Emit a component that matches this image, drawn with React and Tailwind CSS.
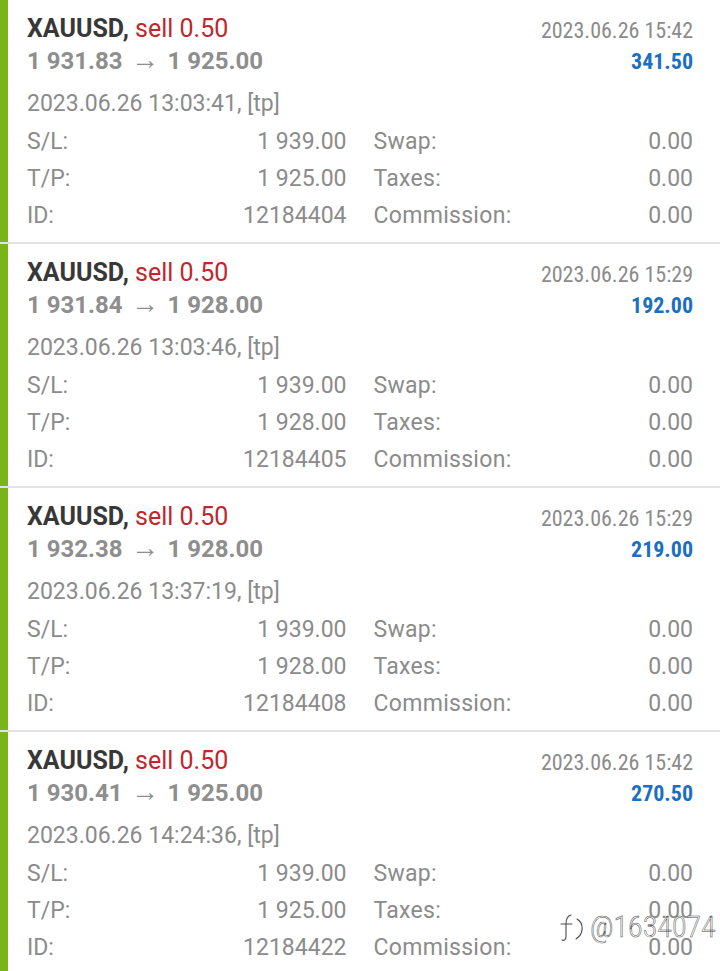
import React from 'react';

const trades = [
  { open: '1 931.83', close: '1 925.00', closeTime: '2023.06.26 15:42', profit: '341.50', openTime: '2023.06.26 13:03:41', sl: '1 939.00', tp: '1 925.00', id: '12184404' },
  { open: '1 931.84', close: '1 928.00', closeTime: '2023.06.26 15:29', profit: '192.00', openTime: '2023.06.26 13:03:46', sl: '1 939.00', tp: '1 928.00', id: '12184405' },
  { open: '1 932.38', close: '1 928.00', closeTime: '2023.06.26 15:29', profit: '219.00', openTime: '2023.06.26 13:37:19', sl: '1 939.00', tp: '1 928.00', id: '12184408' },
  { open: '1 930.41', close: '1 925.00', closeTime: '2023.06.26 15:42', profit: '270.50', openTime: '2023.06.26 14:24:36', sl: '1 939.00', tp: '1 925.00', id: '12184422' },
];

const condensed = "font-['Roboto_Condensed',Roboto,sans-serif]";

function Row({ label, value, label2, value2 }) {
  return (
    <div className="grid h-[37px] grid-cols-2 items-center gap-[27px] text-[23px] text-[#8b8b8b]">
      <div className="flex justify-between">
        <span>{label}</span>
        <span>{value}</span>
      </div>
      <div className="flex justify-between">
        <span className="tracking-[0.3px]">{label2}</span>
        <span>{value2}</span>
      </div>
    </div>
  );
}

function TradeCard({ t }) {
  return (
    <div>
      <div className="flex">
        <div className="w-[8px] bg-[#79b41a]" />
        <div className="flex-1 pb-[7px] pl-[19px] pr-[27px] pt-[13px]">
          <div className="flex h-[31px] items-center justify-between">
            <div className="text-[25px] font-bold text-[#383838]">
              XAUUSD, <span className="font-normal text-[#c0272d]">sell 0.50</span>
            </div>
            <div className={`${condensed} mt-[4px] text-[22px] text-[#8b8b8b]`}>{t.closeTime}</div>
          </div>
          <div className="flex h-[34px] items-center justify-between">
            <div className="flex items-center text-[24px] font-bold text-[#8e8e8e]">
              <span>{t.open}</span>
              <span className="w-[45px] pb-[3px] text-center text-[28px] font-normal leading-none">→</span>
              <span>{t.close}</span>
            </div>
            <div className={`${condensed} text-[22px] font-bold text-[#1b6fc2]`}>{t.profit}</div>
          </div>
          <div className="mt-[6px] flex h-[40px] items-center text-[23px] text-[#8b8b8b]">
            {t.openTime}, [tp]
          </div>
          <Row label="S/L:" value={t.sl} label2="Swap:" value2="0.00" />
          <Row label="T/P:" value={t.tp} label2="Taxes:" value2="0.00" />
          <Row label="ID:" value={t.id} label2="Commission:" value2="0.00" />
        </div>
      </div>
      <div className="h-[2px] bg-[#e2e2e2]" />
    </div>
  );
}

export default function App() {
  return (
    <div className="relative min-h-[971px] w-[720px] overflow-hidden bg-white font-['Roboto',sans-serif]">
      {trades.map((t) => (
        <TradeCard key={t.id} t={t} />
      ))}
      <div className="absolute left-[558px] top-[910px] flex items-center gap-[2px]">
        <svg width="30" height="34" viewBox="0 0 30 34" fill="none" strokeLinecap="round">
          <g stroke="#fff" strokeWidth="3.4">
            <path d="M13 5 C9 6 8 10 8 14 L8 26 C8 30 6 31 4 30" />
            <path d="M3 14 L14 14" />
            <path d="M19 9 C26 13 26 24 18 29" />
          </g>
          <g stroke="#4a4a4a" strokeWidth="1.1">
            <path d="M13 5 C9 6 8 10 8 14 L8 26 C8 30 6 31 4 30" />
            <path d="M3 14 L14 14" />
            <path d="M19 9 C26 13 26 24 18 29" />
          </g>
        </svg>
        <span className="font-['Roboto_Condensed',Roboto,sans-serif] text-[30px] font-light leading-none text-white [-webkit-text-stroke:0.5px_#4a4a4a]">
          @1634074
        </span>
      </div>
    </div>
  );
}
